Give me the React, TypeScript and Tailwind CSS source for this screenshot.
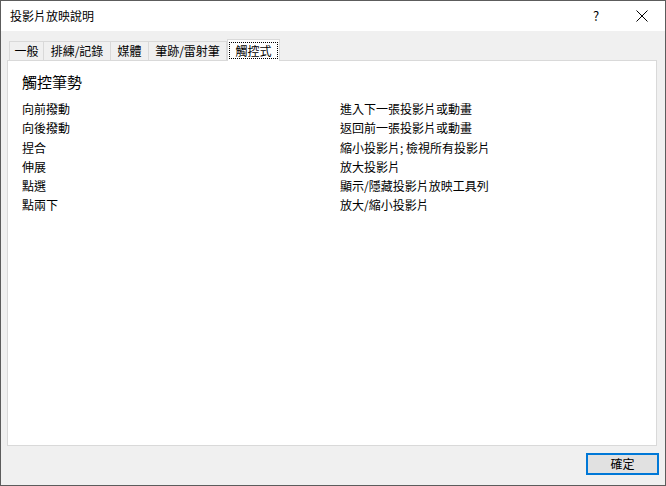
import React from 'react';

const font = { fontFamily: '"Noto Sans CJK TC", "Noto Sans", sans-serif' };

const tabs = [
  { label: '一般', w: 'w-[35px]' },
  { label: '排練/記錄', w: 'w-[67px]' },
  { label: '媒體', w: 'w-[38px]' },
  { label: '筆跡/雷射筆', w: 'w-[78px]' },
];

const gestures = [
  ['向前撥動', '進入下一張投影片或動畫'],
  ['向後撥動', '返回前一張投影片或動畫'],
  ['捏合', '縮小投影片; 檢視所有投影片'],
  ['伸展', '放大投影片'],
  ['點選', '顯示/隱藏投影片放映工具列'],
  ['點兩下', '放大/縮小投影片'],
];

export default function App() {
  return (
    <div
      className="w-[666px] h-[486px] border border-[#5c5c5c] bg-[#f0f0f0] flex flex-col text-[12px] text-black"
      style={font}
    >
      {/* title bar */}
      <div className="h-[30px] bg-white flex items-center">
        <div className="pl-[9px] flex-1 leading-[16px]">投影片放映說明</div>
        <div className="w-[46px] h-full flex items-center justify-center text-[13px]">?</div>
        <div className="w-[46px] h-full flex items-center justify-center">
          <svg width="12" height="12" viewBox="0 0 12 12">
            <path d="M0.5 0.5 L11.5 11.5 M11.5 0.5 L0.5 11.5" stroke="#000" strokeWidth="1" />
          </svg>
        </div>
      </div>

      <div className="flex-1 flex flex-col px-[6px]">
        {/* tabs */}
        <div className="mt-[8px] h-[22px] flex items-end pl-[2px] relative z-10">
          {tabs.map((t, i) => (
            <div
              key={t.label}
              className={`${t.w} h-[19px] mb-px border border-b-0 border-[#d9d9d9] ${i > 0 ? 'border-l-0' : ''} flex items-center justify-center leading-[16px]`}
            >
              {t.label}
            </div>
          ))}
          <div className="w-[53px] h-[22px] border border-b-0 border-[#d9d9d9] bg-white px-[1px] pt-[2px] pb-[2px]">
            <div className="h-full border border-dotted border-black flex items-center justify-center leading-[16px]">
              觸控式
            </div>
          </div>
        </div>

        {/* panel */}
        <div className="-mt-px w-[650px] h-[386px] border border-[#d9d9d9] bg-white pl-[14px] pt-[11px]">
          <div className="text-[15px] leading-[20px]">觸控筆勢</div>
          <div className="mt-[7px] grid grid-cols-[318px_1fr]">
            {gestures.map(([a, b]) => (
              <React.Fragment key={a}>
                <div className="h-[19.3px] leading-[19.3px]">{a}</div>
                <div className="h-[19.3px] leading-[19.3px]">{b}</div>
              </React.Fragment>
            ))}
          </div>
        </div>

        {/* footer */}
        <div className="mt-[7px] flex justify-end">
          <button className="w-[73px] h-[22px] border-2 border-[#0078d7] bg-[#e1e1e1] leading-[16px] flex items-center justify-center">
            確定
          </button>
        </div>
      </div>
    </div>
  );
}
